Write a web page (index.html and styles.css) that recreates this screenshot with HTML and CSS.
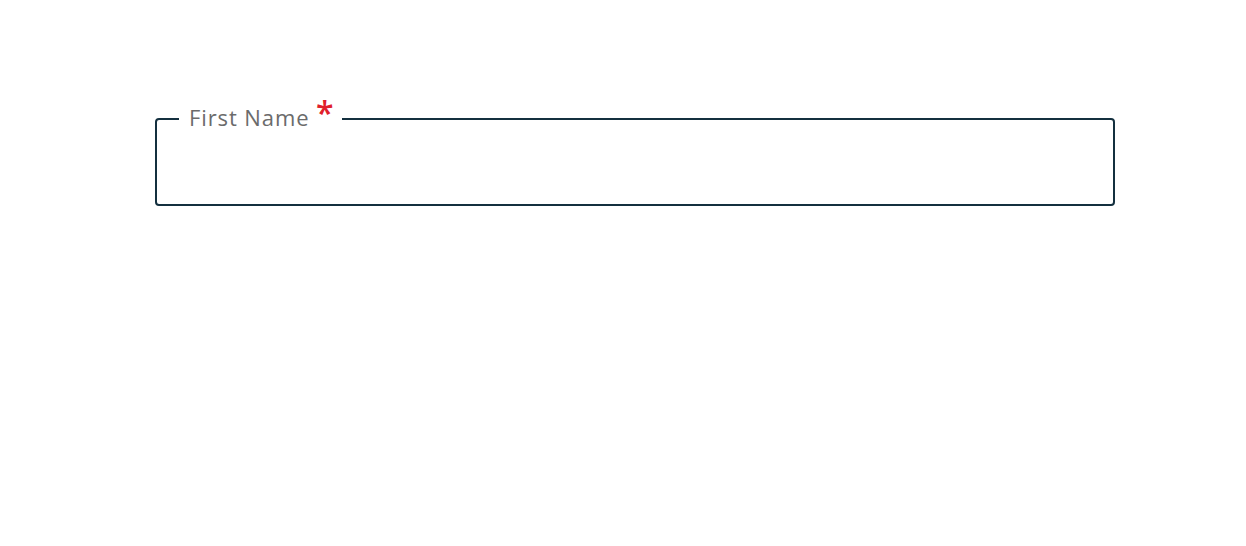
FILE: index.html
```html
<!DOCTYPE html>
<html lang="en">
<head>
<meta charset="utf-8">
<title>First Name</title>
<link rel="stylesheet" href="styles.css">
</head>
<body>
<main class="page">
  <fieldset class="field">
    <legend class="field-label">First Name <span class="required">*</span></legend>
    <input class="field-input" type="text" aria-label="First Name">
  </fieldset>
</main>
</body>
</html>
```
FILE: styles.css
```css
html, body {
  margin: 0;
  padding: 0;
  background: #ffffff;
}
.page {
  padding: 102px 0 0 155px;
}
.field {
  box-sizing: border-box;
  width: 960px;
  height: 104px;
  margin: 0;
  padding: 0 22px;
  border: 2px solid #14303f;
  border-radius: 4px;
}
.field-label {
  padding: 0 8px 4px 10px;
  font-family: "Open Sans", sans-serif;
  font-size: 22px;
  letter-spacing: 0.9px;
  line-height: 30px;
  color: #6b6b6b;
  white-space: nowrap;
}
.required {
  color: #e0202a;
  font-size: 32px;
  font-weight: 600;
  line-height: 0;
  letter-spacing: 0;
  position: relative;
  top: -1px;
}
.field-input {
  display: block;
  width: 100%;
  border: 0;
  outline: none;
  background: transparent;
  font-family: "Open Sans", sans-serif;
  font-size: 20px;
  padding: 10px 0;
}
```
